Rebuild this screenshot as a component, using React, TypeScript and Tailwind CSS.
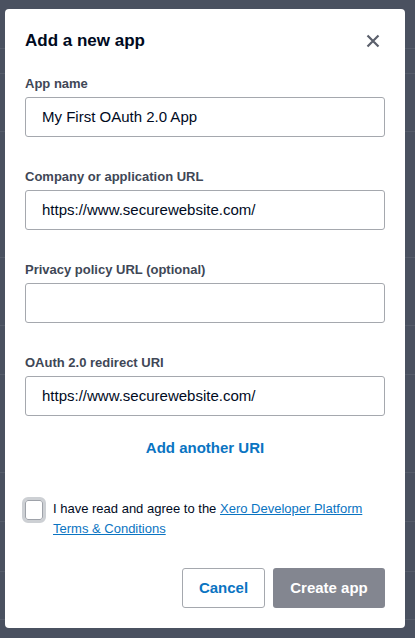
import React from "react";

const lines = [48, 73, 131, 257, 325, 374, 472, 521, 571, 619];

function Field({ label, value }: { label: string; value?: string }) {
  return (
    <div className="flex flex-col">
      <label className="text-[13px] leading-[16px] font-bold text-[#404756] mb-[5px]">{label}</label>
      <div className="h-[40px] w-full rounded-[3px] border border-[#a5a8ae] bg-white flex items-center pl-[16px] text-[15px] text-[#000a1e]">
        {value}
      </div>
    </div>
  );
}

export default function App() {
  return (
    <div
      className="relative w-[415px] h-[638px] overflow-hidden bg-[#4a5160]"
      style={{ fontFamily: '"Liberation Sans", Arial, sans-serif' }}
    >
      <div className="absolute inset-0">
        {lines.map((y) => (
          <div key={y} className="absolute left-0 right-0 h-px bg-[#565d6b]" style={{ top: y }} />
        ))}
      </div>
      <div className="relative pt-[9px] pl-[5px]">
        <div className="w-[400px] h-[619px] bg-white rounded-[4px] px-[20px] flex flex-col">
          <div className="flex items-center justify-between pt-[20px] h-[44px]">
            <h1 className="text-[17px] leading-[24px] font-bold text-[#000a1e]">Add a new app</h1>
            <svg width="14" height="14" viewBox="0 0 14 14" className="mr-[5px]">
              <path d="M1.5 1.5 L12.5 12.5 M12.5 1.5 L1.5 12.5" stroke="#5b606c" strokeWidth="2.2" strokeLinecap="butt" />
            </svg>
          </div>
          <div className="mt-[23px] flex flex-col gap-[32px]">
            <Field label="App name" value="My First OAuth 2.0 App" />
            <Field label="Company or application URL" value="https://www.securewebsite.com/" />
            <Field label="Privacy policy URL (optional)" />
            <Field label="OAuth 2.0 redirect URI" value="https://www.securewebsite.com/" />
          </div>
          <div className="mt-[22px] text-center text-[15px] leading-[20px] font-bold text-[#0a74c2]">Add another URI</div>
          <div className="mt-[39px] flex items-start">
            <div className="w-[24px] h-[26px] rounded-[6px] border-[3px] border-[#cdd0d4] shrink-0 -ml-[3px]">
              <div className="w-full h-full rounded-[3px] border border-[#9ea2a9] bg-white" />
            </div>
            <p className="ml-[7px] mt-[2px] text-[13px] leading-[20px] text-[#000a1e]">
              I have read and agree to the{" "}
              <a className="text-[#0a74c2] underline">Xero Developer Platform Terms &amp; Conditions</a>
            </p>
          </div>
          <div className="mt-[29px] flex justify-end gap-[8px]">
            <button className="h-[40px] w-[83px] rounded-[3px] border border-[#a5a8ae] bg-white text-[15px] font-bold text-[#0a74c2]">
              Cancel
            </button>
            <button className="h-[40px] w-[112px] rounded-[3px] bg-[#838690] text-[15px] font-bold text-white">
              Create app
            </button>
          </div>
        </div>
      </div>
    </div>
  );
}
